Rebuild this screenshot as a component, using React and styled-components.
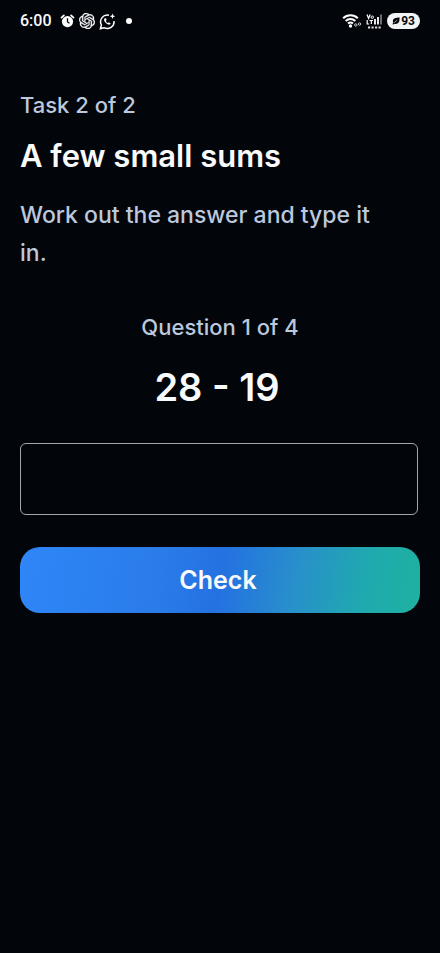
import React, { useState } from "react";
import styled, { createGlobalStyle } from "styled-components";
import { SiOpenai } from "react-icons/si";

const GlobalStyle = createGlobalStyle`
  *, *::before, *::after { box-sizing: border-box; }
  body {
    margin: 0;
    background: #02050a;
    color: #f8fafc;
    font-family: Inter, "Liberation Sans", sans-serif;
  }
`;

const Screen = styled.div`
  min-height: 100vh;
  display: flex;
  flex-direction: column;
`;

const StatusBar = styled.header`
  display: flex;
  align-items: center;
  justify-content: space-between;
  height: 42px;
  padding: 0 20px;
`;

const StatusGroup = styled.div`
  display: flex;
  align-items: center;
  gap: 4px;
`;

const Clock = styled.time`
  font: 500 16px/20px Roboto, sans-serif;
  margin-right: 4px;
`;

const Dot = styled.span`
  width: 6px;
  height: 6px;
  margin-left: 6px;
  border-radius: 50%;
  background: #fff;
`;

const Battery = styled.span`
  display: flex;
  align-items: center;
  gap: 1px;
  height: 16px;
  padding: 0 5px;
  border-radius: 8px;
  background: #f1f3f4;
  color: #05080c;
  font: 700 12px/16px Roboto, sans-serif;
`;

const Main = styled.main`
  display: flex;
  flex-direction: column;
  padding: 44px 20px 40px;
`;

const Label = styled.p`
  margin: 0;
  color: #bcc8dc;
  font-size: 22px;
  font-weight: 500;
  line-height: 38px;
`;

const Title = styled.h1`
  margin: 8px 0 16px;
  font-size: 31px;
  font-weight: 600;
  line-height: 48px;
`;

const Intro = styled(Label)`
  padding-right: 24px;
  font-size: 23px;
`;

const Form = styled.form`
  display: flex;
  flex-direction: column;
  margin-top: 36px;
`;

const QuestionNumber = styled(Label)`
  text-align: center;
`;

const Sum = styled.label`
  margin: 17px 0 32px;
  padding-right: 6px;
  font-size: 38px;
  font-weight: 600;
  line-height: 48px;
  text-align: center;
`;

const Answer = styled.input`
  height: 72px;
  margin-right: 2px;
  padding: 0 20px;
  border: 1px solid #a3a6ab;
  border-radius: 6px;
  outline: none;
  background: transparent;
  color: inherit;
  font: 500 24px/32px Inter, sans-serif;
`;

const CheckButton = styled.button`
  height: 66px;
  margin-top: 32px;
  padding: 0 4px 0 0;
  border: 0;
  border-radius: 20px;
  background: linear-gradient(100deg, #2f86f8 0%, #2a7ce9 35%, #2471e2 50%, #288fcb 68%, #1faaae 86%, #1fb1a0 100%);
  color: #f8fafc;
  font: 600 25px/32px Inter, sans-serif;
  cursor: pointer;
`;

function AlarmIcon() {
  return (
    <svg width="15" height="14" viewBox="0 0 15 14" fill="none" aria-hidden="true">
      <circle cx="7.5" cy="7.6" r="5.6" fill="#fff" />
      <path d="M1.500 3.600 3.900 1.400M13.500 3.600 11.100 1.400" stroke="#fff" strokeWidth="1.800" strokeLinecap="round" />
      <path d="M7.500 4.300V8l2 1.200" stroke="#02050a" strokeWidth="1.300" />
    </svg>
  );
}

function ChatIcon() {
  return (
    <svg width="17" height="17" viewBox="0 0 17 17" fill="none" aria-hidden="true">
      <path d="M10 2.200A6.800 6.800 0 0 0 2.400 12L1.400 15.600 5 14.700A6.800 6.800 0 0 0 15 8" stroke="#fff" strokeWidth="1.500" />
      <path d="M6 5.200c-1.300.6-1.200 2.200 0 3.900s3.300 3 4.700 2.400c.7-.3 1-1 .7-1.300L9.800 9.200l-.9.900C7.800 9.600 7.200 8.800 6.800 8l.8-1L7 5.200Z" fill="#fff" />
      <path d="M13.500.5l.8 2 2 .8-2 .8-.8 2-.8-2-2-.8 2-.8Z" fill="#fff" />
    </svg>
  );
}

function WifiIcon() {
  return (
    <svg width="20" height="16" viewBox="0 0 20 16" fill="none" aria-hidden="true">
      <path d="M1.200 5.200a10.500 10.500 0 0 1 14.600 0M3.700 8a7 7 0 0 1 9.600 0M6 10.600a3.700 3.700 0 0 1 5 0" stroke="#fff" strokeWidth="2" />
      <circle cx="8.500" cy="13" r="1.700" fill="#fff" />
      <circle cx="13.800" cy="12" r="1.200" stroke="#ccc" />
      <circle cx="17.500" cy="11" r="1.200" stroke="#ccc" />
    </svg>
  );
}

function SignalIcon() {
  return (
    <svg width="17" height="17" viewBox="0 0 17 17" fill="none" aria-hidden="true">
      <path d="M1 1.500 2.600 5.500 4.200 1.500M1.200 7v4h2M3.500 7.500h3.500M5.300 7.500V11" stroke="#fff" strokeWidth="1.200" />
      <circle cx="6.300" cy="4.200" r="1.200" stroke="#fff" />
      <path d="M9 6v5.500M12 4v7.500" stroke="#fff" strokeWidth="1.800" />
      <path d="M15 1.500v10" stroke="#888" strokeWidth="1.600" />
      <path d="M2 14.500h13" stroke="#ddd" strokeWidth="2" strokeDasharray="2.200 1.300" />
    </svg>
  );
}

function LeafIcon() {
  return (
    <svg width="8" height="8" viewBox="0 0 9 9" aria-hidden="true">
      <path d="M8.700.5C4 .8 1.300 1.500 1 4.200c-.1 1 .1 1.700.5 2.400L.5 8l.8.6 1-1c3 .8 5.700-.6 6-3.600.1-1.300 0-2.500.4-3.500Z" fill="#05080c" />
      <path d="M2.500 6.500 5.800 3.500" stroke="#f1f3f4" strokeWidth=".7" />
    </svg>
  );
}

export default function App() {
  const [answer, setAnswer] = useState("");
  return (
    <>
      <GlobalStyle />
      <Screen>
        <StatusBar>
          <StatusGroup>
            <Clock>6:00</Clock>
            <AlarmIcon />
            <SiOpenai size={16} stroke="currentColor" strokeWidth={0.5} aria-hidden="true" />
            <ChatIcon />
            <Dot />
          </StatusGroup>
          <StatusGroup>
            <WifiIcon />
            <SignalIcon />
            <Battery><LeafIcon />93</Battery>
          </StatusGroup>
        </StatusBar>
        <Main>
          <Label>Task 2 of 2</Label>
          <Title>A few small sums</Title>
          <Intro>Work out the answer and type it in.</Intro>
          <Form onSubmit={(e) => e.preventDefault()}>
            <QuestionNumber>Question 1 of 4</QuestionNumber>
            <Sum htmlFor="answer">28 - 19</Sum>
            <Answer id="answer" inputMode="numeric" autoComplete="off" value={answer} onChange={(e) => setAnswer(e.target.value)} />
            <CheckButton type="submit">Check</CheckButton>
          </Form>
        </Main>
      </Screen>
    </>
  );
}
